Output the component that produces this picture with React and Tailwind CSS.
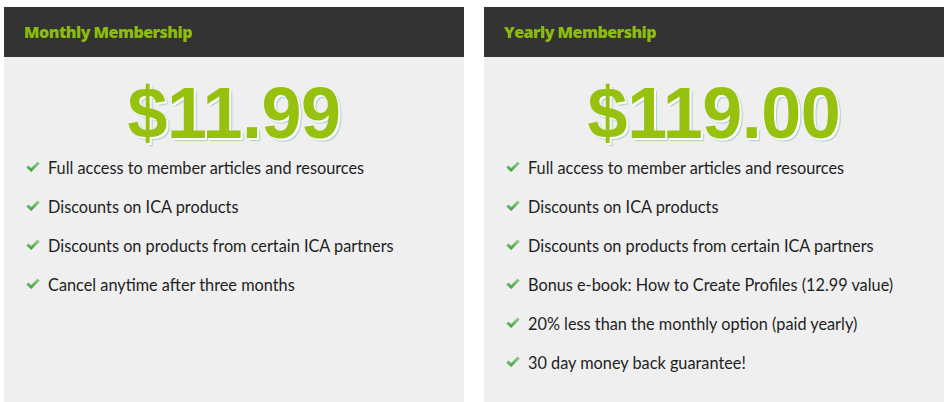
import React from 'react';

const plans = [
  {
    title: 'Monthly Membership',
    price: '$11.99',
    perks: [
      'Full access to member articles and resources',
      'Discounts on ICA products',
      'Discounts on products from certain ICA partners',
      'Cancel anytime after three months',
    ],
  },
  {
    title: 'Yearly Membership',
    price: '$119.00',
    perks: [
      'Full access to member articles and resources',
      'Discounts on ICA products',
      'Discounts on products from certain ICA partners',
      'Bonus e-book: How to Create Profiles (12.99 value)',
      '20% less than the monthly option (paid yearly)',
      '30 day money back guarantee!',
    ],
  },
];

const Check = () => (
  <svg width="14" height="12" viewBox="0 0 14 12" className="shrink-0 -mt-[3px]">
    <defs>
      <linearGradient id="chk" x1="0" y1="0" x2="0" y2="1">
        <stop offset="0" stopColor="#8fd48a" />
        <stop offset="1" stopColor="#3f9e3c" />
      </linearGradient>
    </defs>
    <path d="M0.3 6.6 L2.6 4.4 L5.2 7 L11.5 0.4 L13.7 2.4 L5.2 11 Z" fill="url(#chk)" />
  </svg>
);

const PlanCard = ({ plan }) => (
  <div className="w-[460px] h-[400px] bg-[#efefef] shrink-0">
    <div className="h-[50px] bg-[#333333] flex items-center px-5">
      <h3 className="text-[#8dbd0c] text-[16px] font-extrabold tracking-[-0.5px] font-['Open_Sans',sans-serif]">
        {plan.title}
      </h3>
    </div>
    <div className="mt-[20px] text-center leading-none text-[72px] font-bold text-[#97c10f] tracking-[-0.5px] font-['Liberation_Sans',Arial,sans-serif] [text-shadow:2px_2px_0_#fff,3px_3px_1px_#a9cfc9]">
      {plan.price}
    </div>
    <ul className="px-5 font-['Lato',sans-serif] text-[16.3px] text-[#1e1e1e]">
      {plan.perks.map((perk) => (
        <li key={perk} className="h-[39px] flex items-center gap-[8px] pl-[2px]">
          <Check />
          <span>{perk}</span>
        </li>
      ))}
    </ul>
  </div>
);

export default function App() {
  return (
    <div className="w-[949px] h-[402px] overflow-hidden bg-white flex gap-5 pt-[7px] pl-1">
      {plans.map((plan) => (
        <PlanCard key={plan.title} plan={plan} />
      ))}
    </div>
  );
}
